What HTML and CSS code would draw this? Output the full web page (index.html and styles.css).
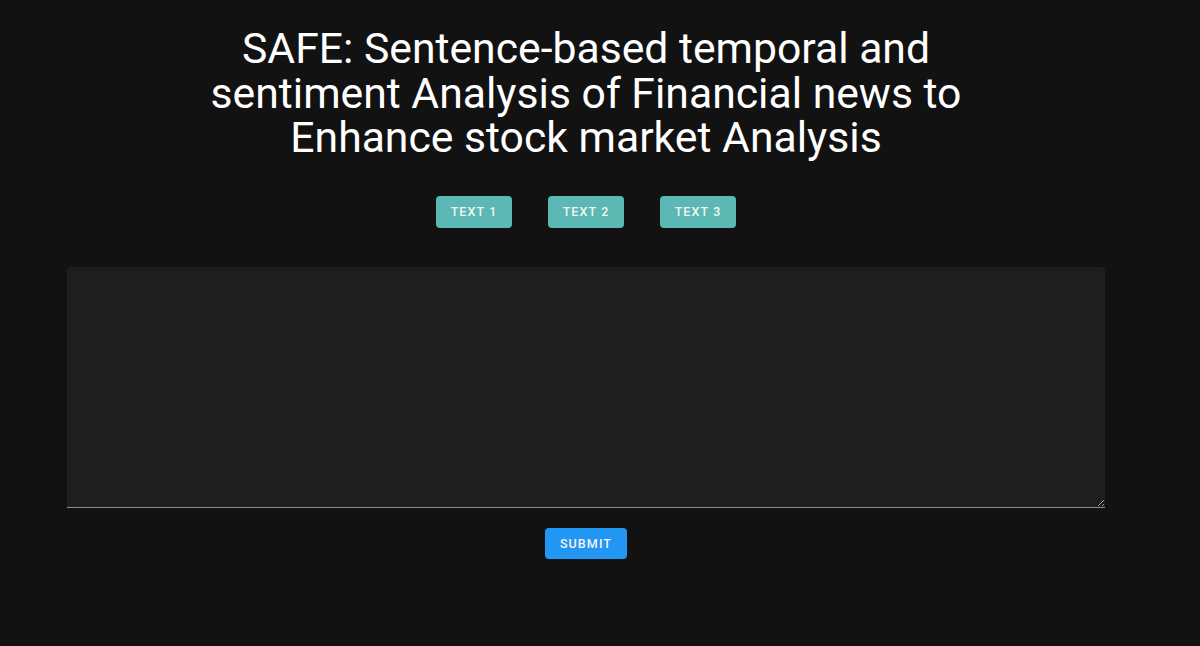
FILE: index.html
```html
<!DOCTYPE html>
<html lang="en">
<head>
    <meta charset="UTF-8">
    <meta name="viewport" content="width=device-width, initial-scale=1.0">
    <title>SAFE</title>
    <link rel="stylesheet" href="styles.css">
</head>
<body>
    <div class="page">
        <h1 class="title">SAFE: Sentence-based temporal and sentiment Analysis of Financial news to Enhance stock market Analysis</h1>
        <div class="samples">
            <button class="btn btn-sample">Text 1</button>
            <button class="btn btn-sample">Text 2</button>
            <button class="btn btn-sample">Text 3</button>
        </div>
        <textarea class="news-input"></textarea>
        <button class="btn btn-submit">Submit</button>
    </div>
</body>
</html>
```

FILE: styles.css
```css
body {
    margin: 0;
    background: #121212;
    color: #fff;
    font-family: Roboto, "Noto Sans", sans-serif;
}
.page {
    width: 1172px;
    display: flex;
    flex-direction: column;
    align-items: center;
}
.title {
    width: 760px;
    margin: 26px 0 0;
    font-size: 42.7px;
    font-weight: 400;
    line-height: 44.5px;
    text-align: center;
}
.samples {
    display: flex;
    gap: 36px;
    margin-top: 36px;
}
.btn {
    border: none;
    border-radius: 4px;
    color: #f4f4f4;
    font-family: Roboto, sans-serif;
    font-size: 12.5px;
    font-weight: 500;
    letter-spacing: 1.1px;
    text-transform: uppercase;
    white-space: nowrap;
    height: 32px;
    padding: 0;
    cursor: pointer;
}
.btn-sample {
    background: #5bb8b3;
    width: 76px;
}
.news-input {
    display: block;
    width: 1038px;
    height: 241px;
    box-sizing: border-box;
    margin-top: 39px;
    background: #1e1e1e;
    border: none;
    border-bottom: 1px solid #8a8a8a;
    border-radius: 4px 4px 0 0;
    color: #fff;
    font-family: Roboto, sans-serif;
    font-size: 16px;
    padding: 12px;
    outline: none;
}
.btn-submit {
    background: #2196f3;
    width: 82px;
    height: 31px;
    margin-top: 20px;
}
```
